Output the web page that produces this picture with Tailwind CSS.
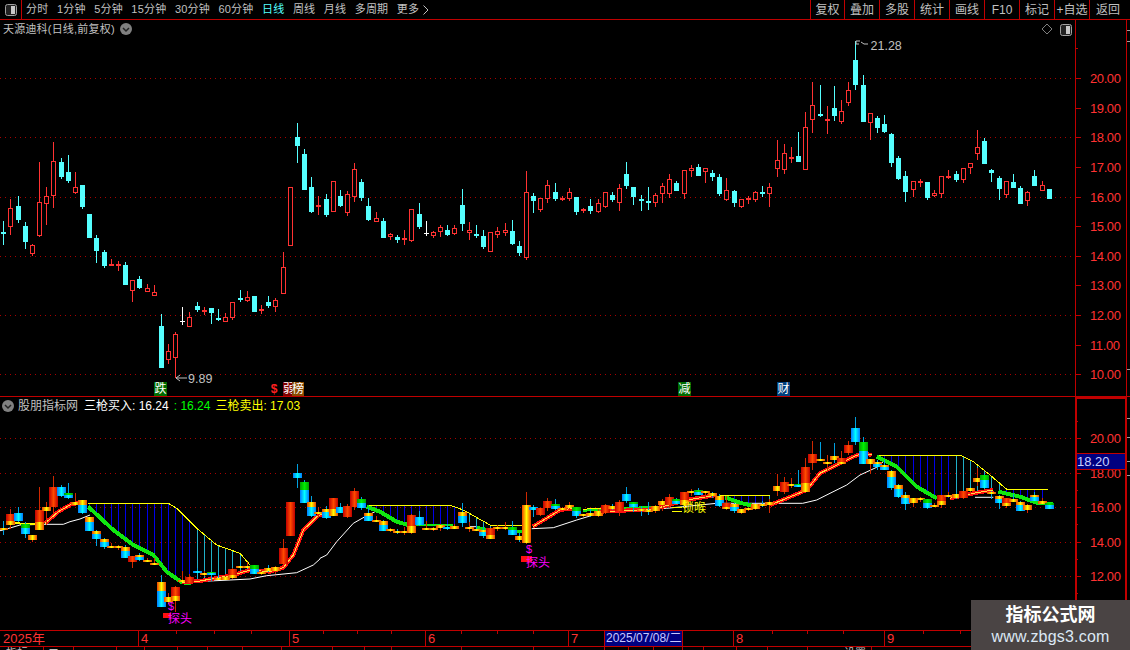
<!DOCTYPE html>
<html lang="en">
<head>
<meta charset="UTF-8">
<title>天源迪科 日线</title>
<script src="https://cdn.jsdelivr.net/npm/@tailwindcss/browser@4"></script>
</head>
<body class="bg-black">
<div class="relative flex flex-col w-[1130px] h-[650px] overflow-hidden bg-black text-[#c0c0c0] font-['Liberation_Sans','Noto_Sans_CJK_SC',sans-serif]">

  <!-- toolbar -->
  <div class="flex items-center h-[20px] shrink-0 border-b border-[#c00000]">
    <div class="flex items-center justify-center w-[22px] h-full border-r border-[#c00000]">
      <svg width="12" height="12" viewBox="0 0 12 12"><rect x="0.5" y="0.5" width="11" height="11" rx="2" fill="#222" stroke="#a0a0a0"/><rect x="6" y="2" width="4" height="8" fill="#c8c8c8"/></svg>
    </div>
    <div class="flex items-center gap-[8.5px] pl-[4px] text-[11px] tracking-[0.2px] whitespace-nowrap">
      <span>分时</span><span>1分钟</span><span>5分钟</span><span>15分钟</span><span>30分钟</span><span>60分钟</span>
      <span class="text-[#55ffff]">日线</span><span>周线</span><span>月线</span><span>多周期</span>
      <span class="flex items-center gap-[4px]">更多
        <svg width="6" height="10" viewBox="0 0 6 10"><path d="M0.5 0.5 L5 5 L0.5 9.5" fill="none" stroke="#c0c0c0"/></svg>
      </span>
    </div>
    <div class="flex ml-auto h-full text-[12px] whitespace-nowrap">
      <span class="flex items-center justify-center w-[34px] border-l border-[#c00000]">复权</span>
      <span class="flex items-center justify-center w-[35px] border-l border-[#c00000]">叠加</span>
      <span class="flex items-center justify-center w-[35px] border-l border-[#c00000]">多股</span>
      <span class="flex items-center justify-center w-[35px] border-l border-[#c00000]">统计</span>
      <span class="flex items-center justify-center w-[35px] border-l border-[#c00000]">画线</span>
      <span class="flex items-center justify-center w-[35px] border-l border-[#c00000]">F10</span>
      <span class="flex items-center justify-center w-[35px] border-l border-[#c00000]">标记</span>
      <span class="flex items-center justify-center w-[35px] border-l border-[#c00000]">+自选</span>
      <span class="flex items-center justify-center w-[41px] pr-[4px] border-l border-[#c00000]">返回</span>
    </div>
  </div>

  <!-- main chart -->
  <div class="relative h-[377px] shrink-0">
    <svg id="mainChart" class="block" width="1130" height="377" viewBox="0 20 1130 377"></svg>
    <div class="absolute left-[3px] top-[1px] flex items-center gap-[5px] text-[11px] tracking-[0.2px] whitespace-nowrap">
      <span>天源迪科(日线,前复权)</span>
      <svg width="12" height="12" viewBox="0 0 12 12"><circle cx="6" cy="6" r="6" fill="#808080"/><path d="M3 5 L6 8 L9 5" fill="none" stroke="#222" stroke-width="1.5"/></svg>
    </div>
    <span class="absolute left-[154px] top-[362px] w-[13px] h-[14px] bg-[#006c00] text-white text-[12px] leading-[14px] text-center">跌</span>
    <span class="absolute left-[270px] top-[362px] w-[8px] h-[14px] text-[#ff2020] font-bold text-[12px] leading-[14px] text-center">$</span>
    <span class="absolute left-[283px] top-[362px] w-[10px] h-[14px] overflow-hidden bg-[#800000] text-white text-[12px] leading-[14px]">弱</span>
    <span class="absolute left-[292px] top-[362px] w-[12px] h-[14px] bg-[#8a4a00] text-white text-[12px] leading-[14px] text-center">榜</span>
    <span class="absolute left-[678px] top-[362px] w-[13px] h-[14px] bg-[#006c00] text-white text-[12px] leading-[14px] text-center">减</span>
    <span class="absolute left-[777px] top-[362px] w-[13px] h-[14px] bg-[#00407c] text-white text-[12px] leading-[14px] text-center">财</span>
  </div>

  <!-- indicator panel -->
  <div class="relative h-[233px] shrink-0">
    <svg id="subChart" class="block" width="1130" height="233" viewBox="0 397 1130 233"></svg>
    <div class="absolute left-[2px] top-0 flex items-center text-[12px] whitespace-nowrap">
      <svg class="mr-[4px]" width="12" height="12" viewBox="0 0 12 12"><circle cx="6" cy="6" r="6" fill="#808080"/><path d="M3 5 L6 8 L9 5" fill="none" stroke="#222" stroke-width="1.5"/></svg>
      <span>股朋指标网</span>
      <span class="ml-[6px] text-white">三枪买入: 16.24</span>
      <span class="ml-[5px] text-[#00ff00]">: 16.24</span>
      <span class="ml-[5px] text-[#ffff00]">三枪卖出: 17.03</span>
    </div>
    <span class="absolute left-[168px] top-[215px] text-[12px] leading-[14px] text-[#ff00ff]">探头</span>
    <span class="absolute left-[168px] top-[203px] text-[11px] leading-[12px] text-[#ff00ff]">$</span>
    <span class="absolute left-[526px] top-[159px] text-[12px] leading-[14px] text-[#ff00ff]">探头</span>
    <span class="absolute left-[526px] top-[146px] text-[11px] leading-[12px] text-[#ff00ff]">$</span>
    <span class="absolute left-[682px] top-[104px] text-[12px] leading-[14px] text-[#ffff00]">锁喉</span>
  </div>

  <!-- date axis -->
  <div class="relative flex h-[17px] shrink-0 border-y border-[#c00000] text-[13px] leading-[15px] text-[#ff3232]">
    <span class="w-[138px] pl-[3px]">2025年</span>
    <span class="w-[151px] pl-[2px] border-l border-[#c00000]">4</span>
    <span class="w-[136px] pl-[2px] border-l border-[#c00000]">5</span>
    <span class="w-[143px] pl-[2px] border-l border-[#c00000]">6</span>
    <span class="w-[36px] pl-[2px] border-l border-[#c00000]">7</span>
    <span class="w-[79px] pl-[1px] border-x border-[#c00000] bg-[#000080] text-[12px] text-[#c8c8ff] whitespace-nowrap">2025/07/08/二</span>
    <span class="w-[50px]"></span>
    <span class="w-[151px] pl-[2px] border-l border-[#c00000]">8</span>
    <span class="w-[191px] pl-[2px] border-l border-[#c00000]">9</span>
    <span class="w-[51px] border-x-2 border-[#c00000]"></span>
    <svg class="absolute left-0 top-0" width="1075" height="3">
      <path d="M176 0v3M214 0v3M251 0v3M323 0v3M357 0v3M391 0v3M461 0v3M497 0v3M533 0v3M772 0v3M807 0v3M843 0v3M923 0v3M960 0v3" stroke="#c00000" shape-rendering="crispEdges"/>
    </svg>
  </div>

  <!-- clipped tab strip -->
  <div class="flex h-[3px] overflow-hidden text-[11px] leading-[12px] text-[#c0c0c0] whitespace-nowrap">
    <span class="w-[43px] pl-[6px]">指标</span>
    <span class="w-[30px] border-l border-[#c00000] pl-[4px]">二</span>
    <span class="w-[43px] border-l border-[#c00000]"></span>
    <span class="w-[28px] border-l border-[#c00000]"></span>
    <span class="w-[33px] border-l border-[#c00000]"></span>
    <span class="w-[30px] border-l border-[#c00000]"></span>
    <span class="w-[35px] border-l border-[#c00000]"></span>
    <span class="w-[39px] border-l border-[#c00000]"></span>
    <span class="w-[51px] border-l border-[#c00000]"></span>
    <span class="w-[32px] border-l border-[#c00000]"></span>
    <span class="w-[27px] border-l border-[#c00000]"></span>
    <span class="w-[70px] border-l border-[#c00000]"></span>
    <span class="w-[72px] border-l border-[#c00000]"></span>
    <span class="w-[71px] border-l border-[#c00000]"></span>
    <span class="w-[24px] border-l border-[#c00000]"></span>
    <span class="w-[25px] border-l border-[#c00000]"></span>
    <span class="w-[29px] border-l border-[#c00000]"></span>
    <span class="w-[21px] border-l border-[#c00000]"></span>
    <span class="w-[33px] border-l border-[#c00000]"></span>
    <span class="w-[31px] border-l border-[#c00000]"></span>
    <span class="w-[40px] border-l border-[#c00000]"></span>
    <span class="w-[64px] border-l border-[#c00000] pl-[36px]">设置</span>
    <span class="w-[40px] border-l border-[#c00000]"></span>
  </div>

  <!-- watermark -->
  <div class="absolute right-0 bottom-0 flex flex-col items-center w-[159px] h-[50px] pt-[3px] bg-[#4a4444]">
    <span class="text-[18px] leading-[24px] font-bold text-white">指标公式网</span>
    <span class="text-[16px] leading-[20px] text-[#dce8f4] tracking-[0.2px]">www.zbgs3.com</span>
  </div>
</div>

<script>
// candles as [type, high, bodyTop, bodyBottom, low], y in page pixels
const candles = [];
const add = (off, rows) => rows.forEach(r => candles.push([r[0], off + r[1] / 3, off + r[2] / 3, off + r[3] / 3, off + r[4] / 3]));

add(130, [
  ['c',273,305,309,345],['r',207,235,290,315],['c',198,228,270,278],['c',277,288,336,357],['r',343,346,372,378],
  ['r',97,217,318,320],['r',171,199,221,285],['r',37,94,197,233],['c',84,96,141,147],['c',75,126,153,158],
  ['r',126,171,189,191],['c',165,165,231,236],['c',252,252,324,324],['c',316,324,363,399],['c',360,366,408,414],
  ['r',387,403,407,407],['r',393,402,406,423],['c',396,405,465,465],['r',450,451,483,516],['c',438,447,474,477],
  ['r',462,475,485,485],['r',465,487,497,497],['c',552,588,714,714],['r',642,664,690,702],['r',606,613,684,744],
  ['w',531,574,577,585],['r',546,562,590,590],['c',516,528,540,546],['r',531,541,544,555],['c',534,534,549,582],
  ['c',537,564,568,573],['r',549,562,575,575],['r',516,517,564,570],['c',480,504,510,516],['r',483,502,513,516],
  ['c',498,498,546,546],['r',525,537,541,552],['c',498,516,528,534],['r',504,511,530,546],['r',366,412,492,492],
  ['r',172,172,348,348],['c',-21,21,48,99],['c',57,72,180,180],['c',141,171,246,249],['r',198,226,230,255]
]);
add(120, [
  ['c',222,237,285,291],['r',183,183,276,276],['c',210,228,258,261],['r',213,222,279,288],['r',129,148,230,246],
  ['c',177,186,234,243],['c',234,258,300,303],['r',276,295,305,305],['c',294,303,354,354],['r',339,343,351,360],
  ['c',345,351,360,369],['r',330,355,359,375],['r',267,268,363,366],['c',249,282,321,327],['w',303,339,343,348],
  ['r',333,337,347,354],['r',315,322,335,351],['c',315,330,345,348],['r',315,325,342,345],['c',207,255,312,333],
  ['r',306,331,339,360],['c',315,342,346,354],['c',330,348,381,387],['r',336,337,395,396],['r',321,334,345,354],
  ['r',309,331,339,348],['c',300,333,372,375],['c',363,378,399,408],['r',153,217,413,420],['c',219,228,243,279],
  ['r',234,235,270,276],['r',180,196,236,249],['c',189,216,237,243],['r',228,234,240,243],['r',204,217,236,243],
  ['c',231,231,276,285],['r',264,267,273,279],['c',237,258,273,282],['r',237,250,276,279],['r',216,217,261,264],
  ['c',216,225,240,246],['r',192,205,248,273],['c',126,162,198,207],['c',201,201,231,255],['c',225,237,243,273],
  ['c',201,243,249,270],['r',219,226,248,261],['r',189,199,221,249],['r',162,178,221,234],['c',183,189,213,213],
  ['r',150,151,221,237],['r',135,145,152,171],['c',132,141,168,168],['r',144,145,155,189],['c',150,159,171,183],
  ['c',162,171,222,228]
]);
add(0, [
  ['r',534,570,600,603],['c',570,573,609,621],['r',597,598,621,624],['r',588,594,597,612],['r',573,576,600,606],
  ['c',558,576,579,591]
]);
add(100, [
  ['r',249,262,281,321],['r',120,181,206,231],['r',132,160,209,222],['r',141,171,174,189],['c',96,168,186,186],
  ['r',36,82,209,209],['r',-54,15,60,99],['c',-45,42,46,51],['r',18,58,62,102],['c',-42,24,48,63],
  ['r',0,34,65,72],['r',-54,-30,9,18],['c',-177,-120,-45,-30],['c',-75,-45,66,66],['r',40,40,68,120],
  ['c',48,54,84,99],['c',45,72,96,99],['c',99,102,189,201],['c',168,174,237,240],['c',213,228,276,306],
  ['r',243,244,270,291],['r',237,243,249,261],['c',246,246,294,300],['r',270,280,288,291],['r',228,229,281,294],
  ['r',210,228,232,237],['c',213,222,240,246],['r',204,205,240,249],['r',190,190,204,222],['r',90,141,161,180],
  ['c',114,123,192,192],['c',207,210,219,246],['c',228,234,267,300],['r',243,244,284,294],['c',222,246,264,264],
  ['c',258,264,312,312],['r',273,277,303,318],['c',210,228,258,258],['r',243,256,272,272],['c',267,267,297,297]
]);

const RED = '#ff3232', CYAN = '#55ffff', GRID = '#a80000', AXIS = '#c00000';
const cx = i => Math.round(3.3 + 7.16 * i);
const num = v => Math.round(v * 10) / 10;
const rect = (x, y, w, h, fill) => `<rect x="${x}" y="${y}" width="${w}" height="${h}" fill="${fill}"/>`;
const label = (x, y, s, fill) => `<text x="${x}" y="${y}" fill="${fill}" font-size="13" letter-spacing="-0.4">${s}</text>`;

// dotted grid, axis ticks and price labels of one panel
function axis(y20, step, left, bottom) {
  let s = '';
  for (let v = 21; v >= bottom; v--) {
    const y = Math.round(y20 + (20 - v) * step);
    if (v % 2 === 0) s += `<line x1="0" x2="1075" y1="${y + 0.5}" y2="${y + 0.5}" stroke="${GRID}" stroke-dasharray="1 4"/>`;
    if (v <= 20 && (left || v % 2 === 0)) {
      s += rect(1075, y, 6, 1, AXIS) + label(1090, y + 5, v.toFixed(2), RED);
    } else {
      s += rect(1075, y, 3, 1, AXIS);
    }
  }
  return s;
}

// ---- main panel ----
let m = axis(78, 29.63, true, 10);
m += `<rect x="1075" y="20" width="1" height="377" fill="${AXIS}"/><rect x="1126" y="20" width="1" height="377" fill="${AXIS}"/>`;
m += rect(0, 396, 1130, 1, AXIS);
[30, 41, 369].forEach(y => { m += rect(1127, y, 3, 1, '#a0a0a0'); });
candles.forEach((c, i) => {
  const x = cx(i), col = c[0] === 'c' ? CYAN : c[0] === 'w' ? '#ffffff' : RED;
  const hi = Math.round(c[1]), top = Math.round(c[2]), bot = Math.round(c[3]), lo = Math.round(c[4]);
  m += rect(x, hi, 1, Math.max(top - hi, 0), col) + rect(x, bot, 1, Math.max(lo - bot, 0), col);
  if (c[0] === 'r' && bot - top > 2) {
    m += `<rect x="${x - 1.5}" y="${top + 0.5}" width="4" height="${bot - top - 1}" fill="#000" stroke="${col}"/>`;
  } else if (c[0] === 'w') {
    m += rect(x - 2, top, 5, Math.max(bot - top, 1), col);
  } else {
    m += rect(x - 2, top, 5, Math.max(bot - top, 2), col);
  }
});
// diamond + layout icon, high/low notes
m += `<path d="M1047 24 L1052 29 L1047 34 L1042 29 Z" fill="none" stroke="#808080"/>`;
m += `<rect x="1060.5" y="24.5" width="11" height="11" rx="2" fill="#222" stroke="#a0a0a0"/>` + rect(1066, 26, 4, 8, '#c8c8c8');
m += `<path d="M856 44 V41 H860 M856 44 H859 M861 42 L864 44 H868" fill="none" stroke="#c0c0c0"/>`;
m += `<text x="870.5" y="50" fill="#c0c0c0" font-size="12.5">21.28</text>`;
m += `<path d="M176 378 H187 M176 378 L180 375 M176 378 L180 381" fill="none" stroke="#c0c0c0"/>`;
m += `<text x="188" y="383" fill="#c0c0c0" font-size="12.5">9.89</text>`;
document.getElementById('mainChart').innerHTML = m;

// ---- indicator panel ----
const sy = y => 438.3 + (y - 78) * 0.5805;
const pts = (ox, oy, a) => a.map(p => [ox + p[0] / 3, oy + p[1] / 3]);
const z4 = a => pts(0, 375, a), z6 = a => pts(320, 470, a), z7 = a => pts(720, 410, a);
const poly = (a, stroke, w, crisp) => `<polyline fill="none" stroke="${stroke}" stroke-width="${w}" ${crisp ? 'shape-rendering="crispEdges"' : ''} points="${a.map(p => num(p[0]) + ',' + num(p[1])).join(' ')}"/>`;
const at = (a, x) => {
  for (let k = 0; k < a.length - 1; k++) {
    if (x >= a[k][0] && x <= a[k + 1][0]) return a[k][1] + (a[k + 1][1] - a[k][1]) * (x - a[k][0]) / (a[k + 1][0] - a[k][0]);
  }
  return null;
};

const white = [
  z4([[0,467],[10,465],[60,450],[130,448],[190,448],[210,440],[240,432],[270,420]]),
  z4([[550,622],[750,612],[800,602],[890,593],[940,570],[960,552]]).concat(z6([[0,265],[20,255],[50,215],[100,160],[135,140],[165,125]])),
  z6([[450,170],[480,170]]),
  z6([[635,176],[700,173],[770,150],[820,135]]),
  z6([[900,122],[1040,115],[1190,100]]).concat(z7([[180,280],[248,280],[290,270],[330,250],[380,225],[420,195],[470,172],[490,155]])),
  z7([[765,262],[820,262]])
];
const redLines = [
  z4([[135,445],[175,410],[215,387],[245,383]]),
  z4([[545,622],[600,618],[700,600],[750,585],[810,590],[850,578],[880,540],[910,465],[950,425],[960,420]]).concat(z6([[0,135],[90,115]])),
  z6([[638,170],[720,120],[760,115]]),
  z6([[840,125],[1000,118],[1100,90],[1190,75]]),
  z7([[150,285],[200,265],[260,240],[300,190],[350,165],[400,140],[430,130],[455,135]]),
  z7([[690,265],[760,250],[820,240]])
];
const G1 = z4([[265,395],[340,465],[400,510],[460,540],[500,590],[545,622],[572,624]]);
const G2 = z6([[140,110],[180,125],[230,155],[265,165]]);
const G2b = z6([[265,165],[400,165]]);
const G5 = z7([[15,262],[60,278],[100,288]]);
const G6 = z7([[470,140],[530,170],[590,230],[650,265]]);
const G7 = z7([[835,245],[900,260],[950,278],[1000,283]]);
const Y1 = z4([[265,385],[505,385],[530,400],[590,460],[650,510],[720,535],[750,570]]);
const Y2 = z6([[140,107],[390,106],[430,120],[510,165],[605,165]]);
const Y4 = z7([[0,256],[150,256]]);
const Y5 = z7([[470,135],[720,135],[760,155],[810,195],[860,238],[985,238]]);

let s = axis(438.3, 17.2, false, 11);
s += `<defs>
  <linearGradient id="gr"><stop offset="0" stop-color="#c00000"/><stop offset=".5" stop-color="#ff4a00"/><stop offset="1" stop-color="#c00000"/></linearGradient>
  <linearGradient id="gy"><stop offset="0" stop-color="#f04000"/><stop offset=".5" stop-color="#ffff00"/><stop offset="1" stop-color="#f04000"/></linearGradient>
  <linearGradient id="gc"><stop offset="0" stop-color="#0078ff"/><stop offset=".5" stop-color="#00ffff"/><stop offset="1" stop-color="#0078ff"/></linearGradient>
  <linearGradient id="gg"><stop offset="0" stop-color="#00a000"/><stop offset=".5" stop-color="#00f000"/><stop offset="1" stop-color="#00a000"/></linearGradient>
</defs>`;

// vertical bars between the yellow line and the green/red line below it
function bars(top, bottoms, color) {
  candles.forEach((c, i) => {
    const x = cx(i), a = at(top, x);
    if (a === null) return;
    for (const b of bottoms) {
      const e = at(b, x);
      if (e !== null && e > a) { s += rect(x, Math.round(a), 1, Math.round(e - a), color(x)); break; }
    }
  });
}
const BLUE = '#0000e8', TEAL = '#20b0c8';
bars(Y1, [G1, redLines[1]], x => x > 192 ? TEAL : BLUE);
bars(Y2, [G2, G2b, z6([[400,165],[510,178]])], x => x > 460 ? TEAL : BLUE);
bars(Y4, [G5, z7([[100,288],[150,282]])], x => x > 765 ? TEAL : BLUE);
bars(Y5, [G6, z7([[650,265],[700,265]]), redLines[5], G7], x => (x > 953 && x < 1000) ? TEAL : BLUE);

white.forEach(a => { s += poly(a, '#ffffff', 1); });
[Y1, Y2, Y4, Y5].forEach(a => { s += poly(a, '#ffff00', 1, true); });
s += poly(z4([[30,445],[130,447]]), '#ffff00', 2, true);
s += poly(z6([[790,118],[1000,115]]), '#ffff00', 1.5, true);
[G1, G2, G5, G6, G7].forEach(a => { s += poly(a, '#10e810', 4, true); });
s += poly(G2b, '#10e810', 2, true) + poly(z6([[470,172],[500,178]]), '#10e810', 3, true) + poly(z6([[590,185],[605,185]]), '#10e810', 3, true) + poly(z6([[790,122],[1000,110]]), '#10e810', 2, true);
redLines.forEach(a => { s += poly(a, '#ff1010', 4, true) + poly(a, '#ffe040', 1, true); });

const withGreen = [3,9,29,35,42,50,71,77,80,88,94,97,111,120,129,137,146];
const plainCyan = [2,8,27,41,47,58,62,74,87,119];
const redYellow = [1,5,23,24,32,46,57,68,95,101,112,117,131,140];
candles.forEach((c, i) => {
  const x = cx(i), hi = Math.round(sy(c[1])), top = Math.round(sy(c[2])), bot = Math.round(sy(c[3])), lo = Math.round(sy(c[4]));
  const h = Math.max(bot - top, 2), isRed = c[0] !== 'c';
  s += rect(x, hi, 1, Math.max(lo - hi, 1), isRed ? '#d02800' : '#00a0e0');
  const bl = x - 4, split = f => Math.max(Math.round(h * f), 1);
  if (i === 73) {
    s += rect(bl, top, 9, h, 'url(#gy)');
  } else if (isRed) {
    if (h < 6) s += rect(bl, top, 9, h, 'url(#gy)');
    else if (redYellow.includes(i)) { const u = split(0.62); s += rect(bl, top, 9, u, 'url(#gr)') + rect(bl, top + u, 9, h - u, 'url(#gy)'); }
    else s += rect(bl, top, 9, h, 'url(#gr)');
  } else if (plainCyan.includes(i)) {
    s += rect(bl, top, 9, h, 'url(#gc)');
  } else if (withGreen.includes(i)) {
    const u = split(0.4); s += rect(bl, top, 9, u, 'url(#gg)') + rect(bl, top + u, 9, h - u, 'url(#gc)');
  } else if (h < 5) {
    s += rect(bl, top, 9, h, 'url(#gy)');
  } else {
    const u = split(0.36); s += rect(bl, top, 9, u, 'url(#gy)') + rect(bl, top + u, 9, h - u, 'url(#gc)');
  }
});
// red feet of the 探头 markers and the short line before 锁喉
s += rect(163, 613, 8, 5, '#ff1010') + rect(521, 556, 11, 6, '#ff1010') + rect(672, 507, 10, 1, '#ffff00') + rect(672, 511, 10, 1, '#ffff00');
// axis frame and current price box
s += `<rect x="1075" y="397" width="2" height="233" fill="${AXIS}"/><rect x="1125" y="397" width="2" height="233" fill="${AXIS}"/>`;
s += rect(1075, 397, 52, 2, AXIS);
s += `<rect x="1076.5" y="453.5" width="49" height="16" fill="#000080" stroke="${AXIS}"/>`;
s += `<text x="1077" y="466" fill="#c8d0ff" font-size="13">18.20</text>`;
[418, 437, 461, 475].forEach(y => { s += rect(1127, y, 3, 1, '#a0a0a0'); });
document.getElementById('subChart').innerHTML = s;
</script>
</body>
</html>
